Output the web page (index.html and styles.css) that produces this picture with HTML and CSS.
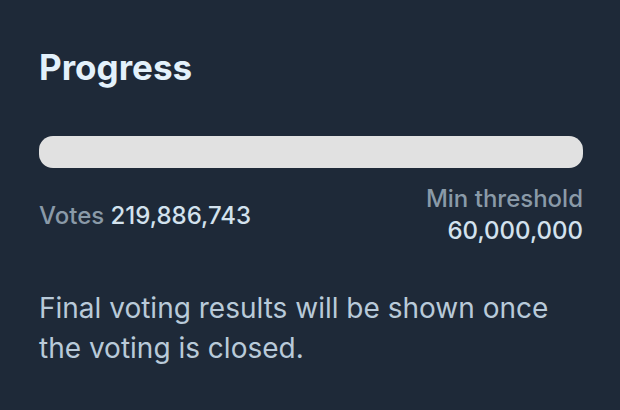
FILE: index.html
```html
<!DOCTYPE html>
<html>
<head>
<meta charset="utf-8">
<link rel="stylesheet" href="styles.css">
</head>
<body>
<section class="card">
  <h2 class="title">Progress</h2>
  <div class="bar"></div>
  <div class="stats">
    <div class="votes"><span class="label">Votes</span> <span class="num">219,886,743</span></div>
    <div class="threshold">
      <div class="label">Min threshold</div>
      <div class="num">60,000,000</div>
    </div>
  </div>
  <p class="note">Final voting results will be shown once the voting is closed.</p>
</section>
</body>
</html>
```
FILE: styles.css
```css
html, body {
  margin: 0;
  padding: 0;
  background: #1e2938;
  width: 620px;
  height: 410px;
  overflow: hidden;
}
.card {
  font-family: Inter, "Noto Sans", sans-serif;
  padding: 45px 37px 0 39px;
  box-sizing: border-box;
  width: 620px;
}
.title {
  margin: 0;
  font-size: 35px;
  font-weight: 700;
  line-height: 44px;
  color: #e3f1fb;
}
.bar {
  margin-top: 47px;
  height: 32px;
  border-radius: 14px;
  background: #e1e1e1;
}
.stats {
  margin-top: 15px;
  display: flex;
  justify-content: space-between;
  align-items: center;
  font-size: 24px;
  font-weight: 500;
}
.label {
  color: #8a9aa8;
}
.num {
  color: #d3e2ee;
}
.threshold {
  text-align: right;
  line-height: 32px;
}
.note {
  margin: 41px 0 0;
  font-size: 28px;
  line-height: 40px;
  color: #b9cad9;
  max-width: 530px;
}
```
